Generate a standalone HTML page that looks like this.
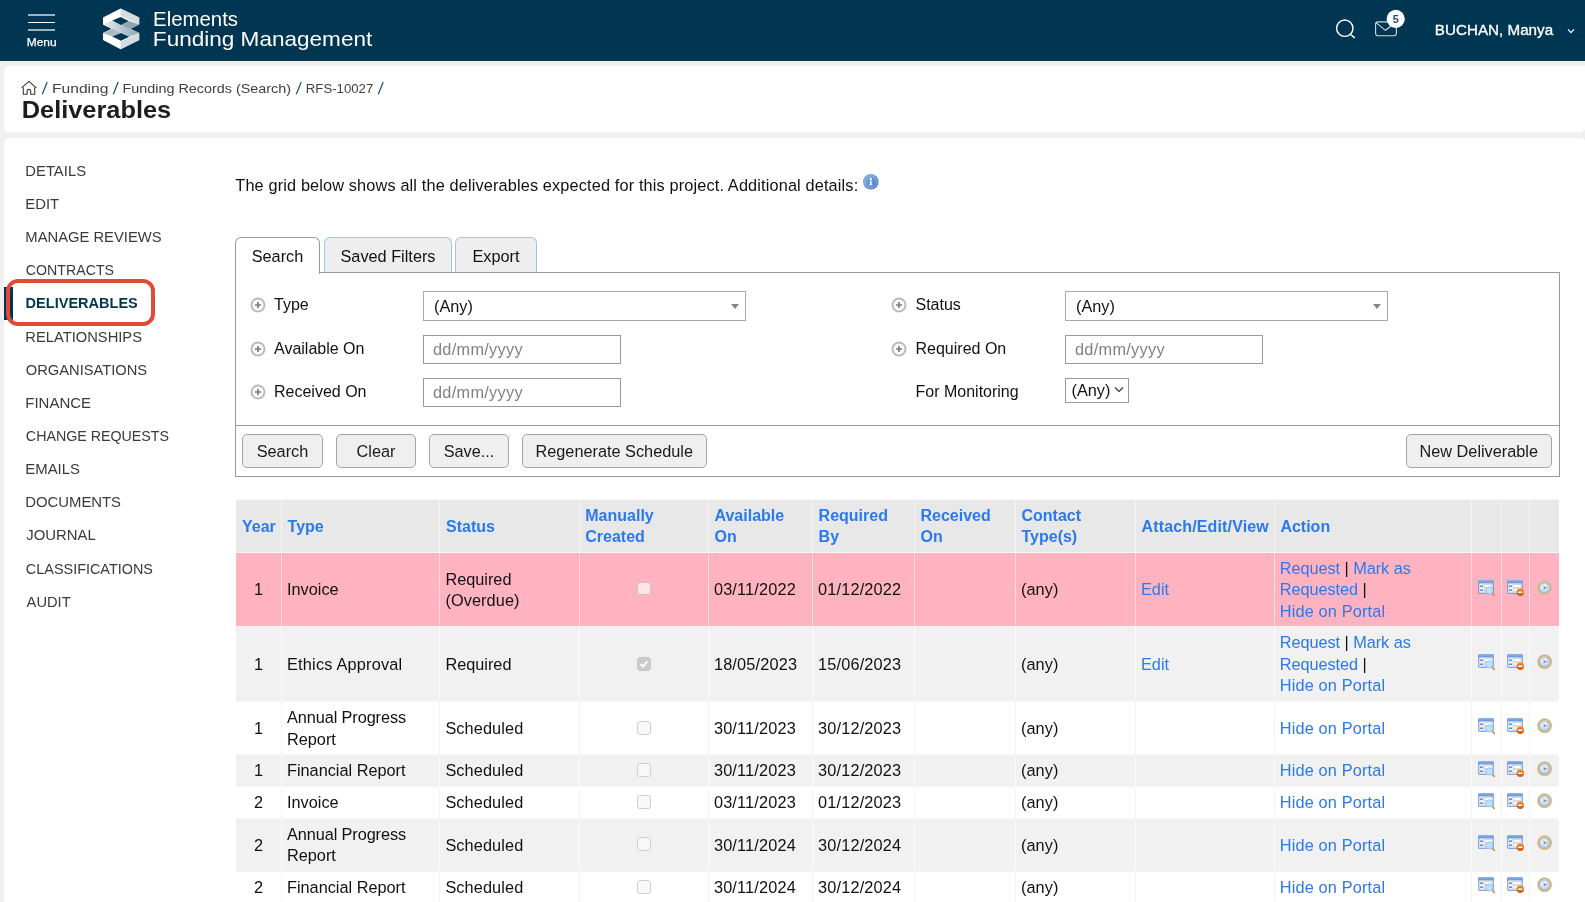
<!DOCTYPE html>
<html>
<head>
<meta charset="utf-8">
<title>Deliverables</title>
<style>
*{box-sizing:border-box;margin:0;padding:0}
html,body{width:1585px;height:902px;overflow:hidden;background:#f0f0f0;font-family:"Liberation Sans",sans-serif;color:#111}
body{will-change:transform}
.a{position:absolute}
.f{position:absolute;white-space:nowrap;transform-origin:0 50%;display:block}
#hdr{position:absolute;left:0;top:0;width:1585px;height:61px;background:#003651}
.card{position:absolute;background:#fff;border-radius:5px 8px 8px 5px}
.t{position:absolute;font-size:16.3px;line-height:20px;white-space:nowrap;color:#111}
.lb{font-size:16px;margin-top:1px}
.tab{position:absolute;top:237.4px;height:34.8px;border:1px solid #9cc4ec;border-bottom:none;border-radius:6px 6px 0 0;background:#eee;font-size:16.3px;line-height:36px;text-align:center;color:#111}
.tab.on{border-color:#999;background:#fff;height:36.4px}
#panel{position:absolute;left:235px;top:272px;width:1325px;height:205px;border:1px solid #999}
.sel{position:absolute;height:30px;width:323px;border:1px solid #aaa;background:#fff;font-size:16.3px;line-height:29px;padding-left:10px;color:#111}
.sel:after{content:"";position:absolute;right:6.2px;top:12px;border:4px solid transparent;border-top:5px solid #858585;border-bottom:none}
.inp{position:absolute;height:29px;width:198px;border:1px solid #999;background:#fff;font-size:16.3px;line-height:27px;padding-left:9px;color:#808080;letter-spacing:.3px}
.btn{position:absolute;top:434px;height:33.6px;border:1px solid #a5a5a5;border-radius:5px;background:#efefef;font-size:16.3px;line-height:32px;text-align:center;color:#1a1a1a}
.row{position:absolute;left:236px;width:1323.4px;border-top:1px solid #f6f6f6}
.c{position:absolute;top:0;height:100%;display:flex;align-items:center;padding:1px 3px 0 5px;font-size:16.3px;line-height:21.4px;color:#111;border-left:1px solid rgba(255,255,255,.55)}
.c.first{border-left:none}
.c.ctr{justify-content:center;padding:1px 0 0 0}
.h .c{background:#e8e8e8;color:#2a79ee;font-weight:bold;font-size:16px;padding-left:5.6px}
.pink .c{background:#ffb3c1}
.g .c{background:#f1f1f1}
.w .c{background:#fff}
.w .c,.g .c{border-left-color:rgba(255,255,255,.7)}
.w .c{border-left-color:#f4f4f4}
a{color:#2a79ee;text-decoration:none}
.cb{display:block;margin-top:-2px;width:14px;height:14px;border:1px solid #cfcfcf;border-radius:3px;background:#f8f8f8}
.pink .cb{background:#fbe5e9;border-color:#cfc0c4;width:13.5px;height:13.5px;margin-top:-3px}
.cb.on{background:#cbcbcb;border-color:#c8c8c8}
.ic{display:block;width:18px;height:17px;margin-top:-4px}
</style>
</head>
<body>

<svg width="0" height="0" style="position:absolute">
<defs>
<linearGradient id="gTitle" x1="0" y1="0" x2="0" y2="1"><stop offset="0" stop-color="#8db4e8"/><stop offset="1" stop-color="#5f8fd6"/></linearGradient>
<linearGradient id="gOr" x1="0" y1="0" x2="0" y2="1"><stop offset="0" stop-color="#f58a2a"/><stop offset="1" stop-color="#d9540a"/></linearGradient>
<radialGradient id="gClock" cx=".4" cy=".35" r=".7"><stop offset="0" stop-color="#ffffff"/><stop offset="1" stop-color="#b9d4f3"/></radialGradient>
<linearGradient id="gInfo" x1="0" y1="0" x2="1" y2="1"><stop offset="0" stop-color="#86b2e6"/><stop offset=".6" stop-color="#5e8dcb"/><stop offset="1" stop-color="#5566b8"/></linearGradient>
</defs></svg>

<div id="hdr">
 <div class="a" style="left:28px;top:14px;width:27px;height:2px;background:rgba(255,255,255,.62)"></div>
 <div class="a" style="left:28px;top:22px;width:27px;height:1px;background:#fff"></div>
 <div class="a" style="left:28px;top:29px;width:27px;height:2px;background:rgba(255,255,255,.62)"></div>
 <span class="f" style="left:26px;top:35px;font-size:11.5px;line-height:14px;color:#fff;-webkit-text-stroke:.25px #fff;transform:translate(0.77px,0.40px) scaleX(1.0333)">Menu</span>
 <svg class="a" style="left:100px;top:6px" width="44" height="46" viewBox="100 6 44 46">
  <defs><linearGradient id="lg1" x1="0" y1="0" x2="1" y2="0"><stop offset="0" stop-color="#e8edf0"/><stop offset="1" stop-color="#8fa5b1"/></linearGradient></defs>
  <polygon points="120.6,8.6 139.2,17.4 139.2,24.6 120.6,33.4 103,24.6 103,17.4" fill="#fff"/>
  <polygon points="120.6,8.6 139.2,17.4 139.2,24.6 120.6,15.8" fill="#d3dbe1"/>
  <polygon points="120.6,24.2 139.2,32.9 139.2,40 120.6,49.2 103,40 103,32.9" fill="#fff"/>
  <polygon points="120.6,49.2 139.2,40 139.2,32.9 120.6,41.8" fill="#d3dbe1"/>
  <polygon points="103,24.6 112.3,20.6 139.2,32.9 129.3,36.8" fill="url(#lg1)"/>
  <polygon points="103,32.9 112.6,28.8 120.9,32.9 112.3,36.6" fill="#a9bac4"/>
  <polygon points="120.9,25 128.9,21 139.2,24.6 130,28.9" fill="#8fa5b1"/>
  <polygon points="120.6,17 128.8,20.9 120.9,25 112.3,20.6" fill="#003651"/>
  <polygon points="120.9,32.9 129.3,36.7 120.9,40.7 112.3,36.6" fill="#003651"/>
 </svg>
 <span class="f" style="left:153px;top:6px;font-size:20.3px;line-height:24px;color:#fff;transform:translate(0.04px,1.00px) scaleX(1.0049)">Elements</span>
 <span class="f" style="left:152px;top:27px;font-size:20.3px;line-height:24px;color:#fff;transform:translate(0.85px,0.10px) scaleX(1.1120)">Funding Management</span>
 <svg class="a" style="left:1330px;top:14px" width="30" height="30" viewBox="1330 14 30 30" fill="none" stroke="#fff" stroke-width="1.4"><circle cx="1344.8" cy="28.2" r="8.2"/><path d="M1350.4 34.2 L1354.4 37.6" stroke-linecap="round"/></svg>
 <svg class="a" style="left:1370px;top:8px" width="40" height="34" viewBox="1370 8 40 34" fill="none" stroke="rgba(255,255,255,.82)" stroke-width="1.1"><rect x="1375.6" y="21.9" width="20.8" height="13.8" rx="2.4"/><path d="M1376.3 22.8 L1385.4 30.3 L1395.7 22.8"/><circle cx="1395.7" cy="18.9" r="9.1" fill="#fff" stroke="none"/></svg>
 <div class="a" style="left:1386.8px;top:12.2px;width:18px;height:14px;text-align:center;font-size:10.8px;line-height:14px;font-weight:bold;color:#1e4e68">5</div>
 <span class="f" style="left:1434px;top:22px;font-size:14px;line-height:17px;color:#fff;-webkit-text-stroke:.3px #fff;transform:translate(0.84px,0.40px) scaleX(1.0858)">BUCHAN, Manya</span>
 <svg class="a" style="left:1566px;top:27px" width="10" height="8" viewBox="0 0 10 8" fill="none" stroke="#fff" stroke-width="1.2"><path d="M2 2.4 L5 5.6 L8 2.4"/></svg>
</div>

<div class="card" style="left:4px;top:66px;width:1583px;height:66px;border-radius:5px 0 8px 5px"></div>
<div class="a" style="left:1580px;top:66px;width:5px;height:50px;background:#fff"></div>
<div class="card" style="left:4px;top:137.5px;width:1583px;height:800px"></div>

<svg class="a" style="left:20px;top:79px" width="18" height="18" viewBox="20 79 18 18" fill="none" stroke="#3a3a3a" stroke-width="1.1" stroke-linejoin="round" stroke-linecap="round"><path d="M21.8 87.6 L29 81.3 L36 87.6"/><path d="M23.3 87.9 V94.3 H27.1 V91.2 a1.8 1.8 0 0 1 3.6 0 V94.3 H34.7 V87.9"/></svg>
<svg class="a" style="left:41.4px;top:80px" width="9" height="16" viewBox="0 0 9 16"><path d="M1.3 14.2 L6.2 2" stroke="#1d5577" stroke-width="1.25" fill="none"/></svg>
<span class="f" style="left:52px;top:80px;font-size:13.2px;line-height:16px;color:#404040;transform:translate(0.02px,0.90px) scaleX(1.1825)">Funding</span>
<svg class="a" style="left:111.6px;top:80px" width="9" height="16" viewBox="0 0 9 16"><path d="M1.3 14.2 L6.2 2" stroke="#1d5577" stroke-width="1.25" fill="none"/></svg>
<span class="f" style="left:122px;top:80px;font-size:13.2px;line-height:16px;color:#404040;transform:translate(0.51px,0.90px) scaleX(1.0894)">Funding Records (Search)</span>
<svg class="a" style="left:295.2px;top:80px" width="9" height="16" viewBox="0 0 9 16"><path d="M1.3 14.2 L6.2 2" stroke="#1d5577" stroke-width="1.25" fill="none"/></svg>
<span class="f" style="left:305px;top:80px;font-size:13.2px;line-height:16px;color:#404040;transform:translate(0.80px,0.90px) scaleX(1.0008)">RFS-10027</span>
<svg class="a" style="left:377.1px;top:80px" width="9" height="16" viewBox="0 0 9 16"><path d="M1.3 14.2 L6.2 2" stroke="#1d5577" stroke-width="1.25" fill="none"/></svg>
<span class="f" style="left:21px;top:96px;font-size:23.2px;line-height:28px;font-weight:bold;color:#1d1d1d;transform:translate(0.76px,0.30px) scaleX(1.0935)">Deliverables</span>

<div class="a" style="left:4px;top:287px;width:9px;height:33px;background:#003651"></div>
<div class="a" style="left:6.2px;top:279.2px;width:149.3px;height:46.6px;border:4px solid #e24a36;border-radius:12px"></div>
<span class="f" style="left:25px;top:162px;font-size:14.5px;line-height:17px;color:#3a3a3a;transform:translate(0.32px,0.70px) scaleX(1.0226)">DETAILS</span>
<span class="f" style="left:25px;top:195px;font-size:14.5px;line-height:17px;color:#3a3a3a;transform:translate(0.32px,0.86px) scaleX(1.0222)">EDIT</span>
<span class="f" style="left:25px;top:229px;font-size:14.5px;line-height:17px;color:#3a3a3a;transform:translate(0.33px,0.02px) scaleX(1.0186)">MANAGE REVIEWS</span>
<span class="f" style="left:25px;top:262px;font-size:14.5px;line-height:17px;color:#3a3a3a;transform:translate(0.87px,0.18px) scaleX(0.9769)">CONTRACTS</span>
<span class="f" style="left:25px;top:295px;font-size:14.5px;line-height:17px;font-weight:bold;color:#003651;transform:translate(0.60px,0.34px) scaleX(1.0018)">DELIVERABLES</span>
<span class="f" style="left:25px;top:328px;font-size:14.5px;line-height:17px;color:#3a3a3a;transform:translate(0.33px,0.50px) scaleX(1.0150)">RELATIONSHIPS</span>
<span class="f" style="left:25px;top:361px;font-size:14.5px;line-height:17px;color:#3a3a3a;transform:translate(0.84px,0.66px) scaleX(1.0123)">ORGANISATIONS</span>
<span class="f" style="left:25px;top:394px;font-size:14.5px;line-height:17px;color:#3a3a3a;transform:translate(0.31px,0.82px) scaleX(1.0332)">FINANCE</span>
<span class="f" style="left:25px;top:427px;font-size:14.5px;line-height:17px;color:#3a3a3a;transform:translate(0.86px,0.98px) scaleX(0.9820)">CHANGE REQUESTS</span>
<span class="f" style="left:25px;top:461px;font-size:14.5px;line-height:17px;color:#3a3a3a;transform:translate(0.31px,0.14px) scaleX(1.0283)">EMAILS</span>
<span class="f" style="left:25px;top:494px;font-size:14.5px;line-height:17px;color:#3a3a3a;transform:translate(0.32px,0.30px) scaleX(1.0240)">DOCUMENTS</span>
<span class="f" style="left:26px;top:527px;font-size:14.5px;line-height:17px;color:#3a3a3a;transform:translate(0.34px,0.46px) scaleX(1.0254)">JOURNAL</span>
<span class="f" style="left:25px;top:560px;font-size:14.5px;line-height:17px;color:#3a3a3a;transform:translate(0.85px,0.62px) scaleX(0.9945)">CLASSIFICATIONS</span>
<span class="f" style="left:26px;top:593px;font-size:14.5px;line-height:17px;color:#3a3a3a;transform:translate(0.60px,0.78px) scaleX(1.0127)">AUDIT</span>

<div class="t" style="left:235.3px;top:174.5px;letter-spacing:.148px">The grid below shows all the deliverables expected for this project. Additional details:</div>
<svg class="a" style="left:861.7px;top:173.1px" width="18" height="18" viewBox="0 0 18 18"><circle cx="8.8" cy="8.8" r="7.8" fill="url(#gInfo)"/><circle cx="8.8" cy="8.8" r="6" fill="none" stroke="#a9c8ee" stroke-width=".8" opacity=".8"/><circle cx="8.8" cy="6" r="1.15" fill="#fff"/><path d="M8 7.8 H9.6 V11.4 H10.6 V12.3 H7 V11.4 H8 Z" fill="#fff"/></svg>

<div id="panel"></div>
<div class="a" style="left:235px;top:425px;width:1325px;height:1px;background:#999"></div>
<div class="tab on" style="left:235px;width:85px">Search</div>
<div class="tab" style="left:324px;width:128px">Saved Filters</div>
<div class="tab" style="left:455px;width:82px">Export</div>

<svg class="a" style="left:249.7px;top:296.9px" width="16" height="16" viewBox="0 0 16 16"><circle cx="8" cy="8" r="6.5" fill="#fcfcfc" stroke="#b9b9b9" stroke-width="1.9"/><path d="M4.9 8H11.1M8 4.9V11.1" stroke="#7a7a7a" stroke-width="1.7"/></svg><div class="t lb" style="left:274px;top:294px">Type</div>
<svg class="a" style="left:249.7px;top:340.5px" width="16" height="16" viewBox="0 0 16 16"><circle cx="8" cy="8" r="6.5" fill="#fcfcfc" stroke="#b9b9b9" stroke-width="1.9"/><path d="M4.9 8H11.1M8 4.9V11.1" stroke="#7a7a7a" stroke-width="1.7"/></svg><div class="t lb" style="left:274px;top:338px">Available On</div>
<svg class="a" style="left:249.7px;top:383.5px" width="16" height="16" viewBox="0 0 16 16"><circle cx="8" cy="8" r="6.5" fill="#fcfcfc" stroke="#b9b9b9" stroke-width="1.9"/><path d="M4.9 8H11.1M8 4.9V11.1" stroke="#7a7a7a" stroke-width="1.7"/></svg><div class="t lb" style="left:274px;top:381px">Received On</div>
<div class="sel" style="left:423px;top:291px">(Any)</div>
<div class="inp" style="left:423px;top:335px">dd/mm/yyyy</div>
<div class="inp" style="left:423px;top:378px">dd/mm/yyyy</div>

<svg class="a" style="left:891.2px;top:296.9px" width="16" height="16" viewBox="0 0 16 16"><circle cx="8" cy="8" r="6.5" fill="#fcfcfc" stroke="#b9b9b9" stroke-width="1.9"/><path d="M4.9 8H11.1M8 4.9V11.1" stroke="#7a7a7a" stroke-width="1.7"/></svg><div class="t lb" style="left:915.5px;top:294px">Status</div>
<svg class="a" style="left:891.2px;top:340.5px" width="16" height="16" viewBox="0 0 16 16"><circle cx="8" cy="8" r="6.5" fill="#fcfcfc" stroke="#b9b9b9" stroke-width="1.9"/><path d="M4.9 8H11.1M8 4.9V11.1" stroke="#7a7a7a" stroke-width="1.7"/></svg><div class="t lb" style="left:915.5px;top:338px">Required On</div>
<div class="t lb" style="left:915.5px;top:381px">For Monitoring</div>
<div class="sel" style="left:1065px;top:291px">(Any)</div>
<div class="inp" style="left:1065px;top:335px">dd/mm/yyyy</div>
<div class="a" style="left:1065px;top:378px;width:64px;height:24.5px;border:1px solid #999;background:#fff;font-size:16.3px;line-height:23px;padding-left:5.5px;color:#111">(Any)<svg class="a" style="left:48px;top:7px" width="10" height="8" viewBox="0 0 10 8" fill="none" stroke="#333" stroke-width="1.1"><path d="M1 1.5 L5 5.5 L9 1.5"/></svg></div>

<div class="btn" style="left:242px;width:81px">Search</div>
<div class="btn" style="left:336px;width:80px">Clear</div>
<div class="btn" style="left:429px;width:80px">Save...</div>
<div class="btn" style="left:522px;width:184.5px">Regenerate Schedule</div>
<div class="btn" style="left:1406px;width:145.5px">New Deliverable</div>

<div class="row h" style="top:498.5px;height:53.6px">
<div class="c first" style="padding-left:6px;left:0.0px;width:45.0px"><div>Year</div></div>
<div class="c" style="left:45.0px;width:158.4px"><div>Type</div></div>
<div class="c" style="left:203.4px;width:139.3px"><div>Status</div></div>
<div class="c" style="left:342.7px;width:129.2px"><div>Manually<br>Created</div></div>
<div class="c" style="left:471.9px;width:104.1px"><div>Available<br>On</div></div>
<div class="c" style="left:576.0px;width:101.9px"><div>Required<br>By</div></div>
<div class="c" style="left:677.9px;width:101.0px"><div>Received<br>On</div></div>
<div class="c" style="left:778.9px;width:120.1px"><div>Contact<br>Type(s)</div></div>
<div class="c" style="left:899.0px;width:138.8px"><div><span style="letter-spacing:.14px">Attach/Edit/View</span></div></div>
<div class="c" style="left:1037.8px;width:197.6px"><div>Action</div></div>
<div class="c" style="left:1235.4px;width:29.4px"><div></div></div>
<div class="c" style="left:1264.8px;width:28.6px"><div></div></div>
<div class="c" style="left:1293.4px;width:29.8px"><div></div></div>
</div>
<div class="row pink" style="top:552.1px;height:74px">
<div class="c first ctr" style="left:0.0px;width:45.0px"><div>1</div></div>
<div class="c" style="left:45.0px;width:158.4px"><div>Invoice</div></div>
<div class="c" style="left:203.4px;width:139.3px"><div>Required<br><span style="letter-spacing:0.1px">(Overdue)</span></div></div>
<div class="c ctr" style="left:342.7px;width:129.2px"><div><span class="cb"></span></div></div>
<div class="c" style="left:471.9px;width:104.1px"><div><span style="letter-spacing:0.18px">03/11/2022</span></div></div>
<div class="c" style="left:576.0px;width:101.9px"><div><span style="letter-spacing:0.18px">01/12/2022</span></div></div>
<div class="c" style="left:677.9px;width:101.0px"><div></div></div>
<div class="c" style="left:778.9px;width:120.1px"><div><span style="letter-spacing:0.12px">(any)</span></div></div>
<div class="c" style="left:899.0px;width:138.8px"><div><a>Edit</a></div></div>
<div class="c" style="left:1037.8px;width:197.6px"><div><span style="letter-spacing:-.05px"><a>Request</a> | <a>Mark as</a><br><a>Requested</a> |<br></span><a style="letter-spacing:.16px">Hide on Portal</a></div></div>
<div class="c ctr" style="left:1235.4px;width:29.4px"><div><svg class="ic" viewBox="0 0 18 17"><rect x="0.3" y="0.3" width="15.4" height="13.4" rx="1" fill="#5f8fd6"/><rect x="0.3" y="0.3" width="15.4" height="3.4" rx="1" fill="url(#gTitle)"/><rect x="1.2" y="3.4" width="13.6" height="9.4" fill="#efefef"/><rect x="6.2" y="4.6" width="7.8" height="3" fill="#fff" stroke="#c4c4c4" stroke-width=".6"/><rect x="6.2" y="8.8" width="7.8" height="3" fill="#fff" stroke="#c4c4c4" stroke-width=".6"/><rect x="2" y="5.5" width="3" height="1.3" fill="#4b7bd6"/><rect x="2" y="9.6" width="3" height="1.3" fill="#4b7bd6"/><path d="M13.6 12.9 L16.3 15.4" stroke="#c29a55" stroke-width="1.7" stroke-linecap="round"/><circle cx="11.2" cy="10.4" r="3.6" fill="#bfe0fa" stroke="#94c2ec" stroke-width=".9"/></svg></div></div>
<div class="c ctr" style="left:1264.8px;width:28.6px"><div><svg class="ic" viewBox="0 0 18 17"><rect x="0.3" y="0.3" width="15.4" height="13.4" rx="1" fill="#5f8fd6"/><rect x="0.3" y="0.3" width="15.4" height="3.4" rx="1" fill="url(#gTitle)"/><rect x="1.2" y="3.4" width="13.6" height="9.4" fill="#efefef"/><rect x="6.2" y="4.6" width="7.8" height="3" fill="#fff" stroke="#c4c4c4" stroke-width=".6"/><rect x="6.2" y="8.8" width="7.8" height="3" fill="#fff" stroke="#c4c4c4" stroke-width=".6"/><rect x="2" y="5.5" width="3" height="1.3" fill="#4b7bd6"/><rect x="2" y="9.6" width="3" height="1.3" fill="#4b7bd6"/><circle cx="13.3" cy="12.2" r="3.7" fill="url(#gOr)"/><rect x="11.1" y="11.5" width="4.4" height="1.5" rx=".3" fill="#fff"/></svg></div></div>
<div class="c ctr" style="left:1293.4px;width:29.8px"><div><svg class="ic" viewBox="0 0 18 17"><circle cx="8.6" cy="7.7" r="7.4" fill="#dccaa2" /><circle cx="8.6" cy="7.7" r="6.8" fill="#c9a968" /><circle cx="8.6" cy="7.7" r="5.7" fill="#e6dcc0"/><circle cx="8.6" cy="7.7" r="5.2" fill="#9dbbe9"/><circle cx="8.6" cy="7.7" r="4.3" fill="url(#gClock)"/><path d="M7.6 4.6 L7.6 9.6 L11.8 6.9 L8.9 7.3 Z" fill="#858a91"/></svg></div></div>
</div>
<div class="row g" style="top:626.1px;height:75px">
<div class="c first ctr" style="left:0.0px;width:45.0px"><div>1</div></div>
<div class="c" style="left:45.0px;width:158.4px"><div><span style="letter-spacing:0.21px">Ethics Approval</span></div></div>
<div class="c" style="left:203.4px;width:139.3px"><div>Required</div></div>
<div class="c ctr" style="left:342.7px;width:129.2px"><div><span class="cb on"><svg width="12" height="12" viewBox="0 0 12 12" style="display:block"><path d="M2.6 6.2 L5 8.6 L9.4 3.2" fill="none" stroke="#fff" stroke-width="1.8"/></svg></span></div></div>
<div class="c" style="left:471.9px;width:104.1px"><div><span style="letter-spacing:0.18px">18/05/2023</span></div></div>
<div class="c" style="left:576.0px;width:101.9px"><div><span style="letter-spacing:0.18px">15/06/2023</span></div></div>
<div class="c" style="left:677.9px;width:101.0px"><div></div></div>
<div class="c" style="left:778.9px;width:120.1px"><div><span style="letter-spacing:0.12px">(any)</span></div></div>
<div class="c" style="left:899.0px;width:138.8px"><div><a>Edit</a></div></div>
<div class="c" style="left:1037.8px;width:197.6px"><div><span style="letter-spacing:-.05px"><a>Request</a> | <a>Mark as</a><br><a>Requested</a> |<br></span><a style="letter-spacing:.16px">Hide on Portal</a></div></div>
<div class="c ctr" style="left:1235.4px;width:29.4px"><div><svg class="ic" viewBox="0 0 18 17"><rect x="0.3" y="0.3" width="15.4" height="13.4" rx="1" fill="#5f8fd6"/><rect x="0.3" y="0.3" width="15.4" height="3.4" rx="1" fill="url(#gTitle)"/><rect x="1.2" y="3.4" width="13.6" height="9.4" fill="#efefef"/><rect x="6.2" y="4.6" width="7.8" height="3" fill="#fff" stroke="#c4c4c4" stroke-width=".6"/><rect x="6.2" y="8.8" width="7.8" height="3" fill="#fff" stroke="#c4c4c4" stroke-width=".6"/><rect x="2" y="5.5" width="3" height="1.3" fill="#4b7bd6"/><rect x="2" y="9.6" width="3" height="1.3" fill="#4b7bd6"/><path d="M13.6 12.9 L16.3 15.4" stroke="#c29a55" stroke-width="1.7" stroke-linecap="round"/><circle cx="11.2" cy="10.4" r="3.6" fill="#bfe0fa" stroke="#94c2ec" stroke-width=".9"/></svg></div></div>
<div class="c ctr" style="left:1264.8px;width:28.6px"><div><svg class="ic" viewBox="0 0 18 17"><rect x="0.3" y="0.3" width="15.4" height="13.4" rx="1" fill="#5f8fd6"/><rect x="0.3" y="0.3" width="15.4" height="3.4" rx="1" fill="url(#gTitle)"/><rect x="1.2" y="3.4" width="13.6" height="9.4" fill="#efefef"/><rect x="6.2" y="4.6" width="7.8" height="3" fill="#fff" stroke="#c4c4c4" stroke-width=".6"/><rect x="6.2" y="8.8" width="7.8" height="3" fill="#fff" stroke="#c4c4c4" stroke-width=".6"/><rect x="2" y="5.5" width="3" height="1.3" fill="#4b7bd6"/><rect x="2" y="9.6" width="3" height="1.3" fill="#4b7bd6"/><circle cx="13.3" cy="12.2" r="3.7" fill="url(#gOr)"/><rect x="11.1" y="11.5" width="4.4" height="1.5" rx=".3" fill="#fff"/></svg></div></div>
<div class="c ctr" style="left:1293.4px;width:29.8px"><div><svg class="ic" viewBox="0 0 18 17"><circle cx="8.6" cy="7.7" r="7.4" fill="#dccaa2" /><circle cx="8.6" cy="7.7" r="6.8" fill="#c9a968" /><circle cx="8.6" cy="7.7" r="5.7" fill="#e6dcc0"/><circle cx="8.6" cy="7.7" r="5.2" fill="#9dbbe9"/><circle cx="8.6" cy="7.7" r="4.3" fill="url(#gClock)"/><path d="M7.6 4.6 L7.6 9.6 L11.8 6.9 L8.9 7.3 Z" fill="#858a91"/></svg></div></div>
</div>
<div class="row w" style="top:701.1px;height:53px">
<div class="c first ctr" style="left:0.0px;width:45.0px"><div>1</div></div>
<div class="c" style="left:45.0px;width:158.4px"><div><span style="letter-spacing:-0.09px">Annual Progress</span><br>Report</div></div>
<div class="c" style="left:203.4px;width:139.3px"><div><span style="letter-spacing:0.11px">Scheduled</span></div></div>
<div class="c ctr" style="left:342.7px;width:129.2px"><div><span class="cb"></span></div></div>
<div class="c" style="left:471.9px;width:104.1px"><div><span style="letter-spacing:0.18px">30/11/2023</span></div></div>
<div class="c" style="left:576.0px;width:101.9px"><div><span style="letter-spacing:0.18px">30/12/2023</span></div></div>
<div class="c" style="left:677.9px;width:101.0px"><div></div></div>
<div class="c" style="left:778.9px;width:120.1px"><div><span style="letter-spacing:0.12px">(any)</span></div></div>
<div class="c" style="left:899.0px;width:138.8px"><div></div></div>
<div class="c" style="left:1037.8px;width:197.6px"><div><a style="letter-spacing:.16px">Hide on Portal</a></div></div>
<div class="c ctr" style="left:1235.4px;width:29.4px"><div><svg class="ic" viewBox="0 0 18 17"><rect x="0.3" y="0.3" width="15.4" height="13.4" rx="1" fill="#5f8fd6"/><rect x="0.3" y="0.3" width="15.4" height="3.4" rx="1" fill="url(#gTitle)"/><rect x="1.2" y="3.4" width="13.6" height="9.4" fill="#efefef"/><rect x="6.2" y="4.6" width="7.8" height="3" fill="#fff" stroke="#c4c4c4" stroke-width=".6"/><rect x="6.2" y="8.8" width="7.8" height="3" fill="#fff" stroke="#c4c4c4" stroke-width=".6"/><rect x="2" y="5.5" width="3" height="1.3" fill="#4b7bd6"/><rect x="2" y="9.6" width="3" height="1.3" fill="#4b7bd6"/><path d="M13.6 12.9 L16.3 15.4" stroke="#c29a55" stroke-width="1.7" stroke-linecap="round"/><circle cx="11.2" cy="10.4" r="3.6" fill="#bfe0fa" stroke="#94c2ec" stroke-width=".9"/></svg></div></div>
<div class="c ctr" style="left:1264.8px;width:28.6px"><div><svg class="ic" viewBox="0 0 18 17"><rect x="0.3" y="0.3" width="15.4" height="13.4" rx="1" fill="#5f8fd6"/><rect x="0.3" y="0.3" width="15.4" height="3.4" rx="1" fill="url(#gTitle)"/><rect x="1.2" y="3.4" width="13.6" height="9.4" fill="#efefef"/><rect x="6.2" y="4.6" width="7.8" height="3" fill="#fff" stroke="#c4c4c4" stroke-width=".6"/><rect x="6.2" y="8.8" width="7.8" height="3" fill="#fff" stroke="#c4c4c4" stroke-width=".6"/><rect x="2" y="5.5" width="3" height="1.3" fill="#4b7bd6"/><rect x="2" y="9.6" width="3" height="1.3" fill="#4b7bd6"/><circle cx="13.3" cy="12.2" r="3.7" fill="url(#gOr)"/><rect x="11.1" y="11.5" width="4.4" height="1.5" rx=".3" fill="#fff"/></svg></div></div>
<div class="c ctr" style="left:1293.4px;width:29.8px"><div><svg class="ic" viewBox="0 0 18 17"><circle cx="8.6" cy="7.7" r="7.4" fill="#dccaa2" /><circle cx="8.6" cy="7.7" r="6.8" fill="#c9a968" /><circle cx="8.6" cy="7.7" r="5.7" fill="#e6dcc0"/><circle cx="8.6" cy="7.7" r="5.2" fill="#9dbbe9"/><circle cx="8.6" cy="7.7" r="4.3" fill="url(#gClock)"/><path d="M7.6 4.6 L7.6 9.6 L11.8 6.9 L8.9 7.3 Z" fill="#858a91"/></svg></div></div>
</div>
<div class="row g" style="top:754.1px;height:32px">
<div class="c first ctr" style="left:0.0px;width:45.0px"><div>1</div></div>
<div class="c" style="left:45.0px;width:158.4px"><div>Financial Report</div></div>
<div class="c" style="left:203.4px;width:139.3px"><div><span style="letter-spacing:0.11px">Scheduled</span></div></div>
<div class="c ctr" style="left:342.7px;width:129.2px"><div><span class="cb"></span></div></div>
<div class="c" style="left:471.9px;width:104.1px"><div><span style="letter-spacing:0.18px">30/11/2023</span></div></div>
<div class="c" style="left:576.0px;width:101.9px"><div><span style="letter-spacing:0.18px">30/12/2023</span></div></div>
<div class="c" style="left:677.9px;width:101.0px"><div></div></div>
<div class="c" style="left:778.9px;width:120.1px"><div><span style="letter-spacing:0.12px">(any)</span></div></div>
<div class="c" style="left:899.0px;width:138.8px"><div></div></div>
<div class="c" style="left:1037.8px;width:197.6px"><div><a style="letter-spacing:.16px">Hide on Portal</a></div></div>
<div class="c ctr" style="left:1235.4px;width:29.4px"><div><svg class="ic" viewBox="0 0 18 17"><rect x="0.3" y="0.3" width="15.4" height="13.4" rx="1" fill="#5f8fd6"/><rect x="0.3" y="0.3" width="15.4" height="3.4" rx="1" fill="url(#gTitle)"/><rect x="1.2" y="3.4" width="13.6" height="9.4" fill="#efefef"/><rect x="6.2" y="4.6" width="7.8" height="3" fill="#fff" stroke="#c4c4c4" stroke-width=".6"/><rect x="6.2" y="8.8" width="7.8" height="3" fill="#fff" stroke="#c4c4c4" stroke-width=".6"/><rect x="2" y="5.5" width="3" height="1.3" fill="#4b7bd6"/><rect x="2" y="9.6" width="3" height="1.3" fill="#4b7bd6"/><path d="M13.6 12.9 L16.3 15.4" stroke="#c29a55" stroke-width="1.7" stroke-linecap="round"/><circle cx="11.2" cy="10.4" r="3.6" fill="#bfe0fa" stroke="#94c2ec" stroke-width=".9"/></svg></div></div>
<div class="c ctr" style="left:1264.8px;width:28.6px"><div><svg class="ic" viewBox="0 0 18 17"><rect x="0.3" y="0.3" width="15.4" height="13.4" rx="1" fill="#5f8fd6"/><rect x="0.3" y="0.3" width="15.4" height="3.4" rx="1" fill="url(#gTitle)"/><rect x="1.2" y="3.4" width="13.6" height="9.4" fill="#efefef"/><rect x="6.2" y="4.6" width="7.8" height="3" fill="#fff" stroke="#c4c4c4" stroke-width=".6"/><rect x="6.2" y="8.8" width="7.8" height="3" fill="#fff" stroke="#c4c4c4" stroke-width=".6"/><rect x="2" y="5.5" width="3" height="1.3" fill="#4b7bd6"/><rect x="2" y="9.6" width="3" height="1.3" fill="#4b7bd6"/><circle cx="13.3" cy="12.2" r="3.7" fill="url(#gOr)"/><rect x="11.1" y="11.5" width="4.4" height="1.5" rx=".3" fill="#fff"/></svg></div></div>
<div class="c ctr" style="left:1293.4px;width:29.8px"><div><svg class="ic" viewBox="0 0 18 17"><circle cx="8.6" cy="7.7" r="7.4" fill="#dccaa2" /><circle cx="8.6" cy="7.7" r="6.8" fill="#c9a968" /><circle cx="8.6" cy="7.7" r="5.7" fill="#e6dcc0"/><circle cx="8.6" cy="7.7" r="5.2" fill="#9dbbe9"/><circle cx="8.6" cy="7.7" r="4.3" fill="url(#gClock)"/><path d="M7.6 4.6 L7.6 9.6 L11.8 6.9 L8.9 7.3 Z" fill="#858a91"/></svg></div></div>
</div>
<div class="row w" style="top:786.1px;height:32px">
<div class="c first ctr" style="left:0.0px;width:45.0px"><div>2</div></div>
<div class="c" style="left:45.0px;width:158.4px"><div>Invoice</div></div>
<div class="c" style="left:203.4px;width:139.3px"><div><span style="letter-spacing:0.11px">Scheduled</span></div></div>
<div class="c ctr" style="left:342.7px;width:129.2px"><div><span class="cb"></span></div></div>
<div class="c" style="left:471.9px;width:104.1px"><div><span style="letter-spacing:0.18px">03/11/2023</span></div></div>
<div class="c" style="left:576.0px;width:101.9px"><div><span style="letter-spacing:0.18px">01/12/2023</span></div></div>
<div class="c" style="left:677.9px;width:101.0px"><div></div></div>
<div class="c" style="left:778.9px;width:120.1px"><div><span style="letter-spacing:0.12px">(any)</span></div></div>
<div class="c" style="left:899.0px;width:138.8px"><div></div></div>
<div class="c" style="left:1037.8px;width:197.6px"><div><a style="letter-spacing:.16px">Hide on Portal</a></div></div>
<div class="c ctr" style="left:1235.4px;width:29.4px"><div><svg class="ic" viewBox="0 0 18 17"><rect x="0.3" y="0.3" width="15.4" height="13.4" rx="1" fill="#5f8fd6"/><rect x="0.3" y="0.3" width="15.4" height="3.4" rx="1" fill="url(#gTitle)"/><rect x="1.2" y="3.4" width="13.6" height="9.4" fill="#efefef"/><rect x="6.2" y="4.6" width="7.8" height="3" fill="#fff" stroke="#c4c4c4" stroke-width=".6"/><rect x="6.2" y="8.8" width="7.8" height="3" fill="#fff" stroke="#c4c4c4" stroke-width=".6"/><rect x="2" y="5.5" width="3" height="1.3" fill="#4b7bd6"/><rect x="2" y="9.6" width="3" height="1.3" fill="#4b7bd6"/><path d="M13.6 12.9 L16.3 15.4" stroke="#c29a55" stroke-width="1.7" stroke-linecap="round"/><circle cx="11.2" cy="10.4" r="3.6" fill="#bfe0fa" stroke="#94c2ec" stroke-width=".9"/></svg></div></div>
<div class="c ctr" style="left:1264.8px;width:28.6px"><div><svg class="ic" viewBox="0 0 18 17"><rect x="0.3" y="0.3" width="15.4" height="13.4" rx="1" fill="#5f8fd6"/><rect x="0.3" y="0.3" width="15.4" height="3.4" rx="1" fill="url(#gTitle)"/><rect x="1.2" y="3.4" width="13.6" height="9.4" fill="#efefef"/><rect x="6.2" y="4.6" width="7.8" height="3" fill="#fff" stroke="#c4c4c4" stroke-width=".6"/><rect x="6.2" y="8.8" width="7.8" height="3" fill="#fff" stroke="#c4c4c4" stroke-width=".6"/><rect x="2" y="5.5" width="3" height="1.3" fill="#4b7bd6"/><rect x="2" y="9.6" width="3" height="1.3" fill="#4b7bd6"/><circle cx="13.3" cy="12.2" r="3.7" fill="url(#gOr)"/><rect x="11.1" y="11.5" width="4.4" height="1.5" rx=".3" fill="#fff"/></svg></div></div>
<div class="c ctr" style="left:1293.4px;width:29.8px"><div><svg class="ic" viewBox="0 0 18 17"><circle cx="8.6" cy="7.7" r="7.4" fill="#dccaa2" /><circle cx="8.6" cy="7.7" r="6.8" fill="#c9a968" /><circle cx="8.6" cy="7.7" r="5.7" fill="#e6dcc0"/><circle cx="8.6" cy="7.7" r="5.2" fill="#9dbbe9"/><circle cx="8.6" cy="7.7" r="4.3" fill="url(#gClock)"/><path d="M7.6 4.6 L7.6 9.6 L11.8 6.9 L8.9 7.3 Z" fill="#858a91"/></svg></div></div>
</div>
<div class="row g" style="top:818.1px;height:52.5px">
<div class="c first ctr" style="left:0.0px;width:45.0px"><div>2</div></div>
<div class="c" style="left:45.0px;width:158.4px"><div><span style="letter-spacing:-0.09px">Annual Progress</span><br>Report</div></div>
<div class="c" style="left:203.4px;width:139.3px"><div><span style="letter-spacing:0.11px">Scheduled</span></div></div>
<div class="c ctr" style="left:342.7px;width:129.2px"><div><span class="cb"></span></div></div>
<div class="c" style="left:471.9px;width:104.1px"><div><span style="letter-spacing:0.18px">30/11/2024</span></div></div>
<div class="c" style="left:576.0px;width:101.9px"><div><span style="letter-spacing:0.18px">30/12/2024</span></div></div>
<div class="c" style="left:677.9px;width:101.0px"><div></div></div>
<div class="c" style="left:778.9px;width:120.1px"><div><span style="letter-spacing:0.12px">(any)</span></div></div>
<div class="c" style="left:899.0px;width:138.8px"><div></div></div>
<div class="c" style="left:1037.8px;width:197.6px"><div><a style="letter-spacing:.16px">Hide on Portal</a></div></div>
<div class="c ctr" style="left:1235.4px;width:29.4px"><div><svg class="ic" viewBox="0 0 18 17"><rect x="0.3" y="0.3" width="15.4" height="13.4" rx="1" fill="#5f8fd6"/><rect x="0.3" y="0.3" width="15.4" height="3.4" rx="1" fill="url(#gTitle)"/><rect x="1.2" y="3.4" width="13.6" height="9.4" fill="#efefef"/><rect x="6.2" y="4.6" width="7.8" height="3" fill="#fff" stroke="#c4c4c4" stroke-width=".6"/><rect x="6.2" y="8.8" width="7.8" height="3" fill="#fff" stroke="#c4c4c4" stroke-width=".6"/><rect x="2" y="5.5" width="3" height="1.3" fill="#4b7bd6"/><rect x="2" y="9.6" width="3" height="1.3" fill="#4b7bd6"/><path d="M13.6 12.9 L16.3 15.4" stroke="#c29a55" stroke-width="1.7" stroke-linecap="round"/><circle cx="11.2" cy="10.4" r="3.6" fill="#bfe0fa" stroke="#94c2ec" stroke-width=".9"/></svg></div></div>
<div class="c ctr" style="left:1264.8px;width:28.6px"><div><svg class="ic" viewBox="0 0 18 17"><rect x="0.3" y="0.3" width="15.4" height="13.4" rx="1" fill="#5f8fd6"/><rect x="0.3" y="0.3" width="15.4" height="3.4" rx="1" fill="url(#gTitle)"/><rect x="1.2" y="3.4" width="13.6" height="9.4" fill="#efefef"/><rect x="6.2" y="4.6" width="7.8" height="3" fill="#fff" stroke="#c4c4c4" stroke-width=".6"/><rect x="6.2" y="8.8" width="7.8" height="3" fill="#fff" stroke="#c4c4c4" stroke-width=".6"/><rect x="2" y="5.5" width="3" height="1.3" fill="#4b7bd6"/><rect x="2" y="9.6" width="3" height="1.3" fill="#4b7bd6"/><circle cx="13.3" cy="12.2" r="3.7" fill="url(#gOr)"/><rect x="11.1" y="11.5" width="4.4" height="1.5" rx=".3" fill="#fff"/></svg></div></div>
<div class="c ctr" style="left:1293.4px;width:29.8px"><div><svg class="ic" viewBox="0 0 18 17"><circle cx="8.6" cy="7.7" r="7.4" fill="#dccaa2" /><circle cx="8.6" cy="7.7" r="6.8" fill="#c9a968" /><circle cx="8.6" cy="7.7" r="5.7" fill="#e6dcc0"/><circle cx="8.6" cy="7.7" r="5.2" fill="#9dbbe9"/><circle cx="8.6" cy="7.7" r="4.3" fill="url(#gClock)"/><path d="M7.6 4.6 L7.6 9.6 L11.8 6.9 L8.9 7.3 Z" fill="#858a91"/></svg></div></div>
</div>
<div class="row w" style="top:870.6px;height:32px">
<div class="c first ctr" style="left:0.0px;width:45.0px"><div>2</div></div>
<div class="c" style="left:45.0px;width:158.4px"><div>Financial Report</div></div>
<div class="c" style="left:203.4px;width:139.3px"><div><span style="letter-spacing:0.11px">Scheduled</span></div></div>
<div class="c ctr" style="left:342.7px;width:129.2px"><div><span class="cb"></span></div></div>
<div class="c" style="left:471.9px;width:104.1px"><div><span style="letter-spacing:0.18px">30/11/2024</span></div></div>
<div class="c" style="left:576.0px;width:101.9px"><div><span style="letter-spacing:0.18px">30/12/2024</span></div></div>
<div class="c" style="left:677.9px;width:101.0px"><div></div></div>
<div class="c" style="left:778.9px;width:120.1px"><div><span style="letter-spacing:0.12px">(any)</span></div></div>
<div class="c" style="left:899.0px;width:138.8px"><div></div></div>
<div class="c" style="left:1037.8px;width:197.6px"><div><a style="letter-spacing:.16px">Hide on Portal</a></div></div>
<div class="c ctr" style="left:1235.4px;width:29.4px"><div><svg class="ic" viewBox="0 0 18 17"><rect x="0.3" y="0.3" width="15.4" height="13.4" rx="1" fill="#5f8fd6"/><rect x="0.3" y="0.3" width="15.4" height="3.4" rx="1" fill="url(#gTitle)"/><rect x="1.2" y="3.4" width="13.6" height="9.4" fill="#efefef"/><rect x="6.2" y="4.6" width="7.8" height="3" fill="#fff" stroke="#c4c4c4" stroke-width=".6"/><rect x="6.2" y="8.8" width="7.8" height="3" fill="#fff" stroke="#c4c4c4" stroke-width=".6"/><rect x="2" y="5.5" width="3" height="1.3" fill="#4b7bd6"/><rect x="2" y="9.6" width="3" height="1.3" fill="#4b7bd6"/><path d="M13.6 12.9 L16.3 15.4" stroke="#c29a55" stroke-width="1.7" stroke-linecap="round"/><circle cx="11.2" cy="10.4" r="3.6" fill="#bfe0fa" stroke="#94c2ec" stroke-width=".9"/></svg></div></div>
<div class="c ctr" style="left:1264.8px;width:28.6px"><div><svg class="ic" viewBox="0 0 18 17"><rect x="0.3" y="0.3" width="15.4" height="13.4" rx="1" fill="#5f8fd6"/><rect x="0.3" y="0.3" width="15.4" height="3.4" rx="1" fill="url(#gTitle)"/><rect x="1.2" y="3.4" width="13.6" height="9.4" fill="#efefef"/><rect x="6.2" y="4.6" width="7.8" height="3" fill="#fff" stroke="#c4c4c4" stroke-width=".6"/><rect x="6.2" y="8.8" width="7.8" height="3" fill="#fff" stroke="#c4c4c4" stroke-width=".6"/><rect x="2" y="5.5" width="3" height="1.3" fill="#4b7bd6"/><rect x="2" y="9.6" width="3" height="1.3" fill="#4b7bd6"/><circle cx="13.3" cy="12.2" r="3.7" fill="url(#gOr)"/><rect x="11.1" y="11.5" width="4.4" height="1.5" rx=".3" fill="#fff"/></svg></div></div>
<div class="c ctr" style="left:1293.4px;width:29.8px"><div><svg class="ic" viewBox="0 0 18 17"><circle cx="8.6" cy="7.7" r="7.4" fill="#dccaa2" /><circle cx="8.6" cy="7.7" r="6.8" fill="#c9a968" /><circle cx="8.6" cy="7.7" r="5.7" fill="#e6dcc0"/><circle cx="8.6" cy="7.7" r="5.2" fill="#9dbbe9"/><circle cx="8.6" cy="7.7" r="4.3" fill="url(#gClock)"/><path d="M7.6 4.6 L7.6 9.6 L11.8 6.9 L8.9 7.3 Z" fill="#858a91"/></svg></div></div>
</div>
</body>
</html>
